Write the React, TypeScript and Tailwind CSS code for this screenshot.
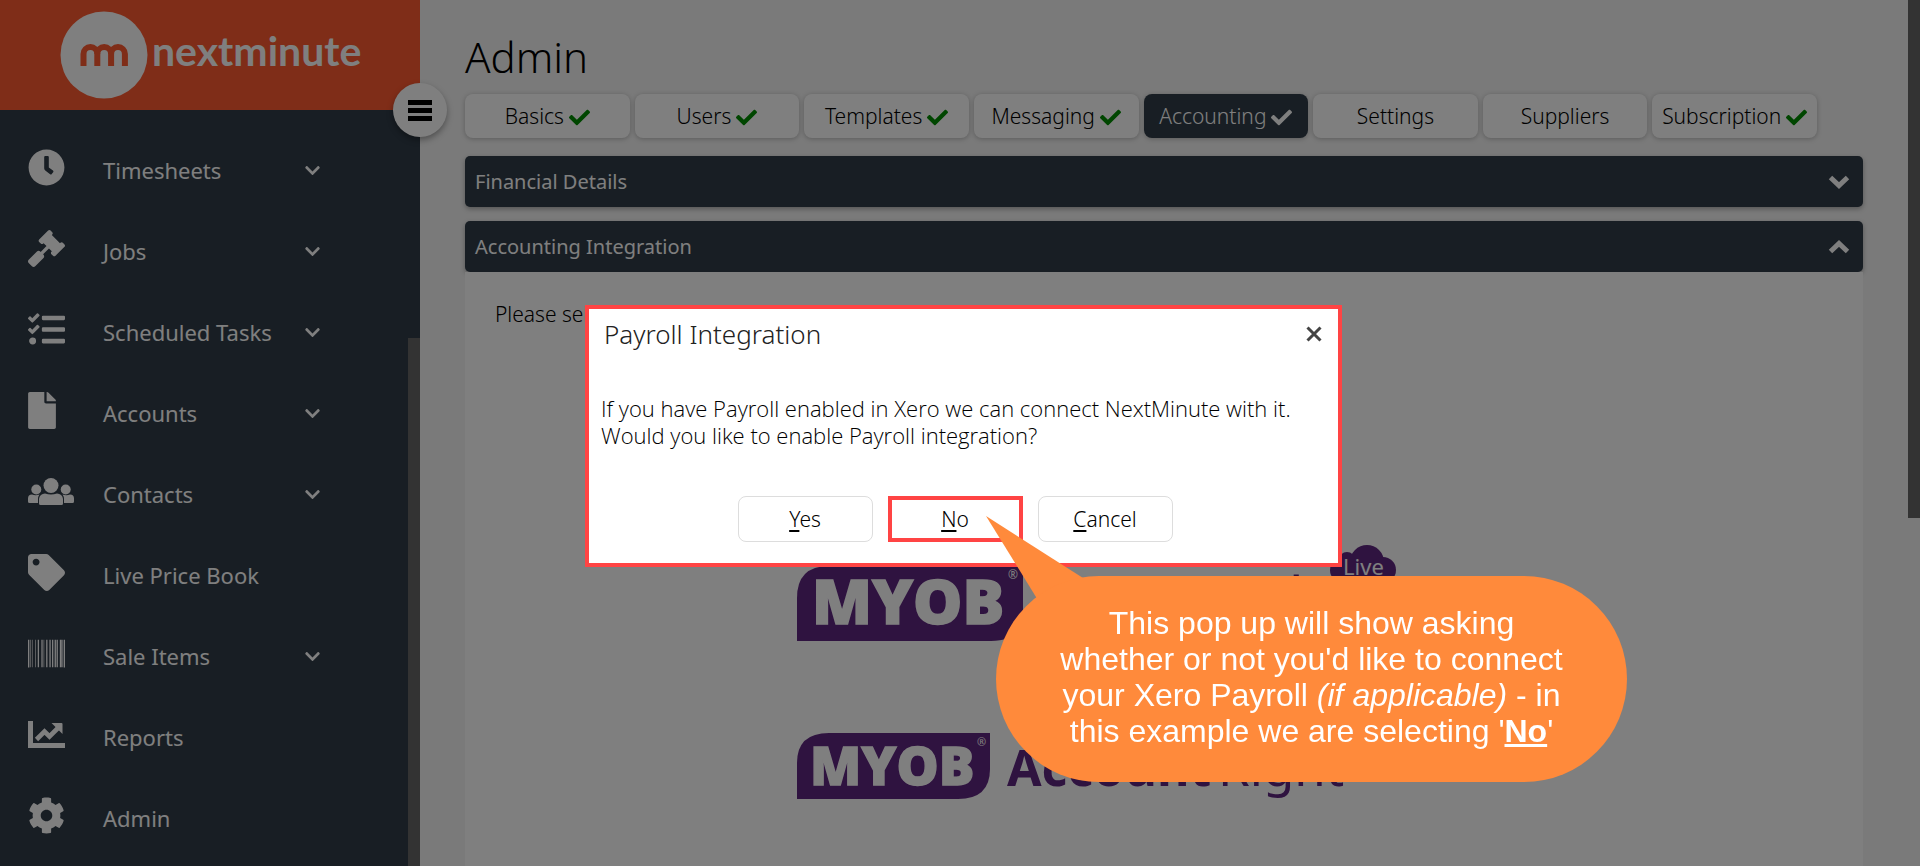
import React from "react";
import {
  FaBarcode,
  FaCheck,
  FaChevronDown,
  FaClock,
  FaCog,
  FaFile,
  FaGavel,
  FaTag,
  FaTasks,
} from "react-icons/fa";

type IconProps = { className?: string };
type MenuItem = { label: string; icon: React.ComponentType<IconProps>; expandable?: boolean };

function DocumentIcon() {
  return <FaFile className="h-[37px] w-7" />;
}

function PeopleIcon() {
  return (
    <svg viewBox="0 0 46 27" className="h-[27px] w-[46px]" fill="currentColor" aria-hidden="true">
      <circle cx="23" cy="7.500" r="7.500" />
      <path d="M11 25.500V21a6 6 0 0 1 6-5.500q6 2 12 0a6 6 0 0 1 6 5.500v4.500q0 1.500-1.500 1.500h-21q-1.500 0-1.500-1.500Z" />
      <circle cx="8.300" cy="11.500" r="5" />
      <circle cx="37.700" cy="11.500" r="5" />
      <path d="M0 23.500V20.500a4 4 0 0 1 4-4q3.500 1.500 7.500 0q-1.500 2-1.500 4.500v4H1.500q-1.500 0-1.500-1.500Z" />
      <path d="M46 23.500V20.500a4 4 0 0 0-4-4q-3.500 1.500-7.500 0q1.500 2 1.500 4.500v4h8.500q1.500 0 1.500-1.500Z" />
    </svg>
  );
}

function ChartIcon() {
  return (
    <svg viewBox="0 0 37 27" className="h-[27px] w-[37px]" fill="currentColor" aria-hidden="true">
      <path d="M0 0H5V22H37V27H0Z" />
      <path d="M8.500 18.500L16.500 10.500L21.500 15.500L30 7" fill="none" stroke="currentColor" strokeWidth="4.600" />
      <path d="M23.500 2H33.500Q34.500 2 34.500 3V13Z" />
    </svg>
  );
}

const menu: MenuItem[] = [
  { label: "Timesheets", icon: FaClock, expandable: true },
  { label: "Jobs", icon: FaGavel, expandable: true },
  { label: "Scheduled Tasks", icon: FaTasks, expandable: true },
  { label: "Accounts", icon: DocumentIcon, expandable: true },
  { label: "Contacts", icon: PeopleIcon, expandable: true },
  { label: "Live Price Book", icon: FaTag },
  { label: "Sale Items", icon: FaBarcode, expandable: true },
  { label: "Reports", icon: ChartIcon },
  { label: "Admin", icon: FaCog },
];

type Tab = { label: string; done?: boolean; active?: boolean };

const tabs: Tab[] = [
  { label: "Basics", done: true },
  { label: "Users", done: true },
  { label: "Templates", done: true },
  { label: "Messaging", done: true },
  { label: "Accounting", done: true, active: true },
  { label: "Settings" },
  { label: "Suppliers" },
  { label: "Subscription", done: true },
];

function BrandMark() {
  return (
    <svg viewBox="0 0 88 88" className="size-[88px] shrink-0" aria-hidden="true">
      <circle cx="44" cy="44" r="43.500" fill="#fff" />
      <g fill="none" stroke="#ff5a30" strokeWidth="6">
        <path d="M23.500 55V43a6.900 6.900 0 0 1 13.800 0V55" />
        <path d="M37.300 43a6.900 6.900 0 0 1 13.800 0V55" />
        <path d="M51.100 43a6.900 6.900 0 0 1 13.800 0V55" />
      </g>
    </svg>
  );
}

function Sidebar() {
  return (
    <aside className="relative flex w-[420px] shrink-0 flex-col bg-[#303c48] text-white">
      <header className="flex h-[110px] items-center gap-1 bg-[#ff5a30] pl-[60px]">
        <BrandMark />
        <span className="pb-2 font-['Lato'] text-[41px] leading-[48px] font-bold">nextminute</span>
      </header>
      <button
        type="button"
        aria-label="Toggle menu"
        className="absolute top-[83px] -right-[27px] flex size-[54px] flex-col items-center justify-center gap-[3px] rounded-full bg-white shadow-[0_3px_6px_rgba(0,0,0,0.35)]"
      >
        <span className="h-[5px] w-6 bg-black" />
        <span className="h-[5px] w-6 bg-black" />
        <span className="h-[5px] w-6 bg-black" />
      </button>
      <div className="flex flex-1">
        <nav className="flex-1 pt-5 pl-7">
          {menu.map(({ label, icon: Icon, expandable }) => (
            <a key={label} href="#" className="flex h-[81px] items-center">
              <span className="flex w-[75px] pb-1.5">
                <Icon className="h-[37px] w-auto" />
              </span>
              <span className="w-[201px] text-[22px] font-normal">{label}</span>
              {expandable && <FaChevronDown className="size-[17px]" />}
            </a>
          ))}
        </nav>
        <div className="mt-[228px] w-3 bg-[#666]" />
      </div>
    </aside>
  );
}

function PanelHeader({ title, open }: { title: string; open?: boolean }) {
  return (
    <button
      type="button"
      aria-expanded={!!open}
      className="flex h-[51px] w-full items-center justify-between rounded-[5px] bg-[#303c48] pr-[13px] pl-2.5 text-left text-[20px] font-normal text-white shadow-[0_2px_5px_rgba(0,0,0,0.3)]"
    >
      {title}
      <svg viewBox="0 0 22 14" className="h-3.5 w-[22px]" fill="none" stroke="currentColor" strokeWidth="5" aria-hidden="true">
        <path d={open ? "M2.500 11.500L11 3.500L19.500 11.500" : "M2.500 2.500L11 10.500L19.500 2.500"} />
      </svg>
    </button>
  );
}

const PURPLE = "#5f2680";

function MyobLiveLogo() {
  return (
    <svg viewBox="0 -6 620 116" className="h-[116px] w-[620px]" role="img" aria-label="MYOB AccountRight Live">
      <path d="M0 94V51Q0 19 32 19H226V64Q226 94 194 94Z" fill={PURPLE} />
      <text x="15" y="77" className="font-['Open_Sans'] text-[62px] font-extrabold" fill="#fff" stroke="#fff" strokeWidth="1.500">MYOB</text>
      <text x="211" y="32" className="font-['Noto_Sans'] text-[12px] font-normal" fill="#fff">®</text>
      <text x="249" y="72" className="font-['Noto_Sans'] text-[42px] font-bold" fill={PURPLE}>Acc</text>
      <text x="405" y="72" className="font-['Noto_Sans'] text-[58px] font-normal" fill={PURPLE}>Right</text>
      <g fill={PURPLE}>
        <circle cx="570" cy="15" r="17" />
        <circle cx="586" cy="23" r="13" />
        <circle cx="546" cy="23" r="13" />
        <circle cx="550" cy="13" r="8" />
        <path d="M546 20H588V36H546Z" />
      </g>
      <text x="546" y="28" className="font-['Noto_Sans'] text-[22px] font-normal" fill="#fff">Live</text>
    </svg>
  );
}

function MyobLogo() {
  return (
    <svg viewBox="0 -10 620 100" className="h-[100px] w-[620px]" role="img" aria-label="MYOB AccountRight">
      <path d="M0 66V30Q0 0 32 0H193V36Q193 66 161 66Z" fill={PURPLE} />
      <text x="13" y="52" className="font-['Open_Sans'] text-[53px] font-extrabold" fill="#fff" stroke="#fff" strokeWidth="1.300">MYOB</text>
      <text x="180" y="13" className="font-['Noto_Sans'] text-[11px] font-normal" fill="#fff">®</text>
      <text x="210" y="53" className="font-['Noto_Sans'] text-[50px] font-bold" fill={PURPLE}>Account</text>
      <text x="421" y="53" className="font-['Noto_Sans'] text-[51px] font-normal" fill={PURPLE}>Right</text>
    </svg>
  );
}

function Main() {
  return (
    <main className="min-w-0 flex-1 overflow-hidden px-[45px]">
      <div className="flex h-full flex-col">
        <h1 className="pt-[29px] text-[42px] leading-[56px] text-black">Admin</h1>
        <div className="mt-[9px] grid max-w-[1352px] grid-cols-8 gap-[5px]">
          {tabs.map(({ label, done, active }) => (
            <button
              key={label}
              type="button"
              className={
                "flex h-[44px] items-center justify-center gap-[5px] rounded-lg pt-0.5 text-[21px] shadow-[0_1px_5px_rgba(0,0,0,0.25)] " +
                (active ? "bg-[#303c48] text-white" : "bg-white text-black")
              }
            >
              {label}
              {done && <FaCheck className={"size-[21px] " + (active ? "text-white" : "text-[#008c00]")} />}
            </button>
          ))}
        </div>
        <div className="mt-[18px] flex flex-1 flex-col gap-3.5">
          <PanelHeader title="Financial Details" />
          <section className="flex flex-1 flex-col">
            <PanelHeader title="Accounting Integration" open />
            <div className="flex-1 bg-white px-[30px] pt-7 text-[21px] text-black">
              <p className="leading-7">Please sel</p>
              <div className="mt-[213px] ml-[302px] flex flex-col gap-[66px]">
                <a href="#"><MyobLiveLogo /></a>
                <a href="#"><MyobLogo /></a>
              </div>
            </div>
          </section>
        </div>
      </div>
    </main>
  );
}

function DialogButton({ label, marked }: { label: string; marked?: boolean }) {
  return (
    <button
      type="button"
      className={
        "flex h-[46px] w-[135px] items-center justify-center bg-white pt-0.5 text-[21px] text-black " +
        (marked ? "border-4 border-[#ff4444]" : "rounded-lg border border-[#dddddd]")
      }
    >
      <span>
        <u className="decoration-2 underline-offset-3">{label[0]}</u>
        {label.slice(1)}
      </span>
    </button>
  );
}

function Callout() {
  return (
    <div className="absolute top-[267px] left-[407px] w-[631px]">
      <svg viewBox="0 0 100 90" className="absolute -top-[60px] -left-[10px] h-[90px] w-[100px]" aria-hidden="true">
        <path d="M0 0L97 62L97 90H56L50 81Z" fill="#ff8a3b" />
      </svg>
      <div className="relative flex h-[206px] items-center justify-center rounded-full bg-[#ff8a3b] pb-1 text-center font-['Liberation_Sans'] text-[32px] leading-9 font-normal text-white">
        <p>
          This pop up will show asking
          <br />
          whether or not you'd like to connect
          <br />
          your Xero Payroll <i>(if applicable)</i> - in
          <br />
          this example we are selecting '<b className="underline decoration-3">No</b>'
        </p>
      </div>
    </div>
  );
}

function PayrollDialog() {
  return (
    <div className="fixed inset-0 flex items-start justify-center bg-black/50 pt-[305px] pl-[7px]">
      <div role="dialog" aria-labelledby="dialog-title" className="relative w-[757px] border-4 border-[#ff4444] bg-white text-[#222]">
        <div className="flex items-center justify-between pt-[7px] pr-4 pl-[15px]">
          <h2 id="dialog-title" className="text-[26px] leading-9">Payroll Integration</h2>
          <button type="button" aria-label="Close">
            <svg viewBox="0 0 16 16" className="size-4" fill="none" stroke="#444" strokeWidth="3">
              <path d="M1.500 1.500L14.500 14.500M14.500 1.500L1.500 14.500" />
            </svg>
          </button>
        </div>
        <p className="mt-[43px] pl-3 font-['Open_Sans'] text-[22px] leading-[27px] font-light text-black">
          If you have Payroll enabled in Xero we can connect NextMinute with it.
          <br />
          Would you like to enable Payroll integration?
        </p>
        <div className="mt-[47px] mb-[21px] flex justify-center gap-[15px] pr-[17px]">
          <DialogButton label="Yes" />
          <DialogButton label="No" marked />
          <DialogButton label="Cancel" />
        </div>
        <Callout />
      </div>
    </div>
  );
}

export default function App() {
  return (
    <div className="flex h-screen overflow-hidden bg-[#f4f4f4] font-['Noto_Sans',sans-serif] font-light">
      <Sidebar />
      <Main />
      <div className="h-[518px] w-3 shrink-0 bg-[#666]" />
      <PayrollDialog />
    </div>
  );
}
